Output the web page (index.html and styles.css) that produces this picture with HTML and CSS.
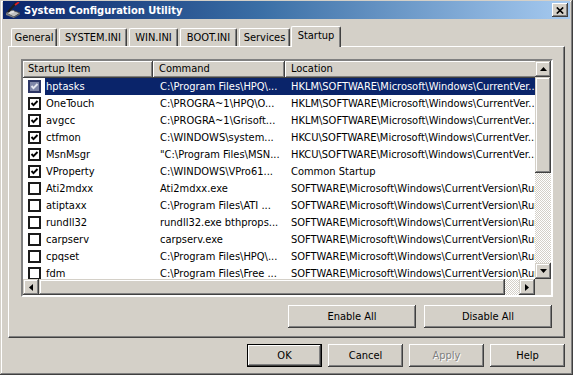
FILE: index.html
```html
<!DOCTYPE html>
<html>
<head>
<meta charset="utf-8">
<title>System Configuration Utility</title>
<link rel="stylesheet" href="styles.css">
</head>
<body>
<div class="window">
  <div class="titlebar">
    <svg class="app-icon" width="16" height="16" viewBox="0 0 16 16">
      <path d="M1 11 L7 8 L15 11 L9 15 Z" fill="#c0c0c0" stroke="#404040" stroke-width="0.8"/>
      <path d="M1 11 L1 13 L9 16 L9 15 Z" fill="#808080"/>
      <path d="M9 15 L15 11 L15 12.5 L9 16 Z" fill="#606060"/>
      <rect x="4" y="9.5" width="5" height="2" fill="#e0e0e0" transform="rotate(-20 6 10)"/>
      <path d="M3 10 L11 1" stroke="#202020" stroke-width="2"/>
      <path d="M10 3 L14 0" stroke="#e02020" stroke-width="1.6"/>
    </svg>
    <span class="title">System Configuration Utility</span>
    <div class="caption-btn">
      <svg width="8" height="7" viewBox="0 0 8 7"><path d="M0.8 0.5 L7.2 6.5 M7.2 0.5 L0.8 6.5" stroke="#000" stroke-width="1.7"/></svg>
    </div>
  </div>

  <div class="client">
    <div class="tabs">
      <div class="tab tab-general">General</div>
      <div class="tab tab-system">SYSTEM.INI</div>
      <div class="tab tab-win">WIN.INI</div>
      <div class="tab tab-boot">BOOT.INI</div>
      <div class="tab tab-services">Services</div>
      <div class="tab tab-startup active">Startup</div>
    </div>

    <div class="panel">
      <div class="listview">
        <div class="lv-main">
          <div class="lv-header">
            <div class="hcell c1">Startup Item</div>
            <div class="hcell c2">Command</div>
            <div class="hcell c3">Location</div>
          </div>
          <div class="lv-body">
            <div class="row selected">
              <div class="cell c1"><span class="cb checked"><svg width="9" height="9" viewBox="0 0 9 9"><path d="M1.5 4 L3.5 6.2 L7.5 2" class="tick"/></svg></span><span class="label">hptasks</span></div>
              <div class="cell c2">C:\Program Files\HPQ\...</div>
              <div class="cell c3">HKLM\SOFTWARE\Microsoft\Windows\CurrentVer...</div>
            </div>
            <div class="row">
              <div class="cell c1"><span class="cb checked"><svg width="9" height="9" viewBox="0 0 9 9"><path d="M1.5 4 L3.5 6.2 L7.5 2" class="tick"/></svg></span><span class="label">OneTouch</span></div>
              <div class="cell c2">C:\PROGRA~1\HPQ\O...</div>
              <div class="cell c3">HKLM\SOFTWARE\Microsoft\Windows\CurrentVer...</div>
            </div>
            <div class="row">
              <div class="cell c1"><span class="cb checked"><svg width="9" height="9" viewBox="0 0 9 9"><path d="M1.5 4 L3.5 6.2 L7.5 2" class="tick"/></svg></span><span class="label">avgcc</span></div>
              <div class="cell c2">C:\PROGRA~1\Grisoft...</div>
              <div class="cell c3">HKLM\SOFTWARE\Microsoft\Windows\CurrentVer...</div>
            </div>
            <div class="row">
              <div class="cell c1"><span class="cb checked"><svg width="9" height="9" viewBox="0 0 9 9"><path d="M1.5 4 L3.5 6.2 L7.5 2" class="tick"/></svg></span><span class="label">ctfmon</span></div>
              <div class="cell c2">C:\WINDOWS\system...</div>
              <div class="cell c3">HKCU\SOFTWARE\Microsoft\Windows\CurrentVer...</div>
            </div>
            <div class="row">
              <div class="cell c1"><span class="cb checked"><svg width="9" height="9" viewBox="0 0 9 9"><path d="M1.5 4 L3.5 6.2 L7.5 2" class="tick"/></svg></span><span class="label">MsnMsgr</span></div>
              <div class="cell c2">"C:\Program Files\MSN...</div>
              <div class="cell c3">HKCU\SOFTWARE\Microsoft\Windows\CurrentVer...</div>
            </div>
            <div class="row">
              <div class="cell c1"><span class="cb checked"><svg width="9" height="9" viewBox="0 0 9 9"><path d="M1.5 4 L3.5 6.2 L7.5 2" class="tick"/></svg></span><span class="label">VProperty</span></div>
              <div class="cell c2">C:\WINDOWS\VPro61...</div>
              <div class="cell c3">Common Startup</div>
            </div>
            <div class="row">
              <div class="cell c1"><span class="cb"></span><span class="label">Ati2mdxx</span></div>
              <div class="cell c2">Ati2mdxx.exe</div>
              <div class="cell c3">SOFTWARE\Microsoft\Windows\CurrentVersion\Run</div>
            </div>
            <div class="row">
              <div class="cell c1"><span class="cb"></span><span class="label">atiptaxx</span></div>
              <div class="cell c2">C:\Program Files\ATI ...</div>
              <div class="cell c3">SOFTWARE\Microsoft\Windows\CurrentVersion\Run</div>
            </div>
            <div class="row">
              <div class="cell c1"><span class="cb"></span><span class="label">rundll32</span></div>
              <div class="cell c2">rundll32.exe bthprops...</div>
              <div class="cell c3">SOFTWARE\Microsoft\Windows\CurrentVersion\Run</div>
            </div>
            <div class="row">
              <div class="cell c1"><span class="cb"></span><span class="label">carpserv</span></div>
              <div class="cell c2">carpserv.exe</div>
              <div class="cell c3">SOFTWARE\Microsoft\Windows\CurrentVersion\Run</div>
            </div>
            <div class="row">
              <div class="cell c1"><span class="cb"></span><span class="label">cpqset</span></div>
              <div class="cell c2">C:\Program Files\HPQ\...</div>
              <div class="cell c3">SOFTWARE\Microsoft\Windows\CurrentVersion\Run</div>
            </div>
            <div class="row">
              <div class="cell c1"><span class="cb"></span><span class="label">fdm</span></div>
              <div class="cell c2">C:\Program Files\Free ...</div>
              <div class="cell c3">SOFTWARE\Microsoft\Windows\CurrentVersion\Run</div>
            </div>
          </div>
        </div>
        <div class="vscroll">
          <div class="sbtn"><svg width="7" height="4" viewBox="0 0 7 4"><path d="M3.5 0 L7 4 L0 4 Z"/></svg></div>
          <div class="thumb vthumb"></div>
          <div class="track"></div>
          <div class="sbtn"><svg width="7" height="4" viewBox="0 0 7 4"><path d="M0 0 L7 0 L3.5 4 Z"/></svg></div>
        </div>
        <div class="hscroll">
          <div class="sbtn"><svg width="4" height="7" viewBox="0 0 4 7"><path d="M4 0 L4 7 L0 3.5 Z"/></svg></div>
          <div class="thumb hthumb"></div>
          <div class="track"></div>
          <div class="sbtn"><svg width="4" height="7" viewBox="0 0 4 7"><path d="M0 0 L4 3.5 L0 7 Z"/></svg></div>
        </div>
        <div class="corner"></div>
      </div>
      <div class="panel-buttons">
        <div class="btn wide">Enable All</div>
        <div class="btn wide">Disable All</div>
      </div>
    </div>

    <div class="dialog-buttons">
      <div class="btn default">OK</div>
      <div class="btn">Cancel</div>
      <div class="btn disabled">Apply</div>
      <div class="btn">Help</div>
    </div>
  </div>
</div>
</body>
</html>
```

FILE: styles.css
```css
* { box-sizing: border-box; }

html, body {
  margin: 0;
  padding: 0;
  background: #d4d0c8;
}

body {
  font-family: "DejaVu Sans Condensed", "Liberation Sans", Arial, sans-serif;
  font-size: 11px;
  color: #000;
}

.window {
  width: 573px;
  height: 375px;
  padding: 1px 3px 3px 3px;
  background: #d4d0c8;
  box-shadow: inset -1px -1px #404040, inset 1px 1px #d4d0c8, inset -2px -2px #808080, inset 2px 2px #fff;
  display: flex;
  flex-direction: column;
}

.titlebar {
  height: 18px;
  display: flex;
  align-items: center;
  padding-left: 2px;
  padding-right: 2px;
  background: linear-gradient(to right, #0a246a, #3a6ea5 45%, #a6caf0);
}

.app-icon {
  flex: none;
  margin-right: 3px;
}

.title {
  flex: 1;
  color: #fff;
  font-family: "DejaVu Sans Condensed", "Liberation Sans", Arial, sans-serif;
  font-weight: bold;
  font-size: 11px;
  white-space: nowrap;
}

.caption-btn {
  width: 16px;
  height: 14px;
  display: flex;
  align-items: center;
  justify-content: center;
  background: #d4d0c8;
  box-shadow: inset -1px -1px #404040, inset 1px 1px #fff, inset -2px -2px #808080;
}

.client {
  flex: 1;
  padding: 7px 5px 0 5px;
  display: flex;
  flex-direction: column;
}

/* Tabs */
.tabs {
  height: 20px;
  display: flex;
  align-items: flex-end;
  padding-left: 3px;
  position: relative;
  z-index: 2;
}

.tab {
  height: 18px;
  margin-right: 2px;
  display: flex;
  align-items: center;
  justify-content: center;
  padding-bottom: 1px;
  background: #d4d0c8;
  border-top: 1px solid #fff;
  border-left: 1px solid #fff;
  border-right: 1px solid #404040;
  border-top-left-radius: 2px;
  border-top-right-radius: 2px;
  box-shadow: inset -1px 0 #808080;
  white-space: nowrap;
}

.tab-general { width: 46px; }
.tab-system { width: 68px; }
.tab-win { width: 49px; }
.tab-boot { width: 57px; }
.tab-services { width: 51px; margin-right: 1px; }
.tab-startup { width: 50px; }

.tab.active {
  height: 21px;
  margin-bottom: -1px;
  padding-bottom: 4px;
}

/* Panel */
.panel {
  height: 292px;
  border-top: 1px solid #fff;
  border-left: 1px solid #fff;
  border-right: 1px solid #404040;
  border-bottom: 1px solid #404040;
  box-shadow: inset -1px -1px #808080;
  padding: 12px 11px 0 12px;
  display: flex;
  flex-direction: column;
}

.listview {
  height: 238px;
  border: 2px solid;
  border-color: #808080 #fff #fff #808080;
  box-shadow: inset 1px 1px #404040, inset -1px -1px #d4d0c8;
  display: grid;
  grid-template-columns: 512px 16px;
  grid-template-rows: 218px 16px;
  background: #fff;
}

.lv-main {
  overflow: hidden;
  background: #fff;
}

.lv-header {
  display: flex;
  height: 17px;
  width: 700px;
}

.hcell {
  height: 17px;
  line-height: 16px;
  background: #d4d0c8;
  box-shadow: inset -1px -1px #404040, inset 1px 1px #fff, inset -2px -2px #808080;
  padding-left: 6px;
  white-space: nowrap;
}

.hcell.c1 { padding-left: 5px; }

.c1 { width: 130px; flex: none; }
.c2 { width: 132px; flex: none; }
.c3 { width: 400px; flex: none; }

.lv-body {
  width: 700px;
}

.row {
  display: flex;
  height: 17px;
  line-height: 17px;
  white-space: nowrap;
}

.cell {
  overflow: hidden;
  height: 17px;
}

.cell.c2 { padding-left: 7px; }
.cell.c3 { padding-left: 6px; }

.cell.c1 {
  display: flex;
  align-items: center;
  padding-left: 5px;
}

.cb {
  flex: none;
  width: 13px;
  height: 13px;
  border: 2px solid #1a1a1a;
  background: #fff;
  display: flex;
  align-items: center;
  justify-content: center;
}

.tick {
  fill: none;
  stroke: #000;
  stroke-width: 1.9;
}

.label {
  flex: 1;
  margin-left: 4px;
  padding-left: 1px;
  height: 17px;
  line-height: 17px;
}

.row.selected .label,
.row.selected .c2,
.row.selected .c3 {
  background: #0a246a;
  color: #fff;
}

.row.selected .cb {
  background: #7e86a8;
  border-color: #2c3666;
}

.row.selected .tick {
  stroke: #e4e6f0;
}

/* Scrollbars */
.vscroll {
  display: flex;
  flex-direction: column;
  background: #d4d0c8;
}

.hscroll {
  display: flex;
  background: #d4d0c8;
}

.sbtn {
  flex: none;
  width: 16px;
  height: 16px;
  display: flex;
  align-items: center;
  justify-content: center;
  background: #d4d0c8;
  box-shadow: inset -1px -1px #404040, inset 1px 1px #d4d0c8, inset -2px -2px #808080, inset 2px 2px #fff;
}

.sbtn svg { fill: #000; }

.thumb {
  flex: none;
  background: #d4d0c8;
  box-shadow: inset -1px -1px #404040, inset 1px 1px #d4d0c8, inset -2px -2px #808080, inset 2px 2px #fff;
}

.vthumb { height: 96px; }
.hthumb { width: 466px; }

.track {
  flex: 1;
  background-color: #d4d0c8;
  background-image: conic-gradient(#fff 25%, #d4d0c8 0 50%, #fff 0 75%, #d4d0c8 0);
  background-size: 2px 2px;
}

.corner {
  background: #d4d0c8;
}

/* Buttons */
.btn {
  height: 23px;
  display: flex;
  align-items: center;
  justify-content: center;
  background: #d4d0c8;
  box-shadow: inset -1px -1px #404040, inset 1px 1px #fff, inset -2px -2px #808080;
  width: 75px;
  white-space: nowrap;
}

.btn.wide { width: 128px; }

.btn.default {
  border: 1px solid #000;
}

.btn.disabled {
  color: #808080;
  text-shadow: 1px 1px #fff;
}

.panel-buttons {
  margin-top: 8px;
  display: flex;
  justify-content: flex-end;
  gap: 8px;
  padding-right: 1px;
}

.dialog-buttons {
  margin-top: 6px;
  display: flex;
  justify-content: flex-end;
  gap: 6px;
}
```
